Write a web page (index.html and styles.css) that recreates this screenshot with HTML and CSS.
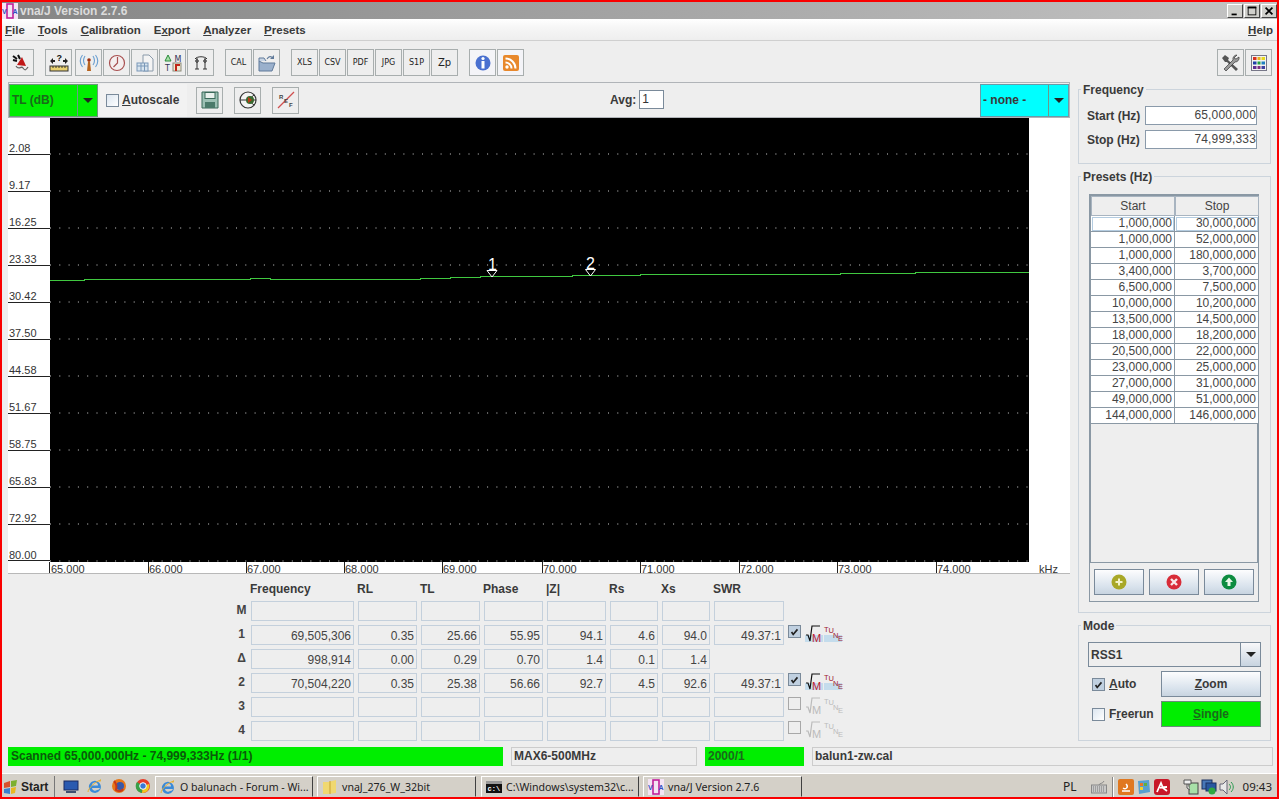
FILE: index.html
```html
<!DOCTYPE html>
<html lang="en">
<head>
<meta charset="utf-8">
<title>vna/J Version 2.7.6</title>
<link rel="stylesheet" href="styles.css">
</head>
<body>
<div class="window">
  <header class="titlebar">
    <svg class="appicon" viewBox="0 0 16 16"><rect width="16" height="16" fill="#f4e4f4"/><rect x="5" y="1" width="6" height="14" fill="none" stroke="#c0209a" stroke-width="1.6"/><text x="0" y="11" class="appicon-t">V</text><text x="10.500" y="11" class="appicon-t">A</text></svg>
    <span class="title-text">vna/J Version 2.7.6</span>
    <div class="winbtns">
      <span class="winbtn"><svg viewBox="0 0 16 14"><rect x="4" y="10" width="6" height="2" fill="#000"/></svg></span>
      <span class="winbtn"><svg viewBox="0 0 16 14"><rect x="3.500" y="2.500" width="9" height="9" fill="none" stroke="#000"/><rect x="3" y="2" width="10" height="2" fill="#000"/></svg></span>
      <span class="winbtn"><svg viewBox="0 0 16 14"><path d="M4 3l8 8M12 3l-8 8" stroke="#000" stroke-width="2"/></svg></span>
    </div>
  </header>

  <nav class="menubar">
    <span><u>F</u>ile</span><span><u>T</u>ools</span><span><u>C</u>alibration</span><span>E<u>x</u>port</span><span><u>A</u>nalyzer</span><span><u>P</u>resets</span>
    <span class="menu-help"><u>H</u>elp</span>
  </nav>

  <div class="toolbar">
    <div class="tgroup">
      <span class="tb"><svg viewBox="0 0 22 22"><path d="M3 4l4 3M8 3l2 4M3 8l4 1" stroke="#111" stroke-width="2"/><path d="M7 13l5-8 4 9z" fill="#c01818"/><path d="M6 14c3 5 5-1 7 2s3 2 5-1" fill="none" stroke="#666" stroke-width="1.300"/></svg></span>
    </div>
    <div class="tgroup">
      <span class="tb tb-wide"><svg viewBox="0 0 22 22"><path d="M2 9l3-3v2h2v2H5v2zM20 9l-3-3v2h-2v2h2v2z" fill="#222"/><text x="8.500" y="9" class="tb-q">?</text><rect x="2" y="14" width="18" height="5" fill="#e8d070" stroke="#333"/><path d="M5 14v2M8 14v2M11 14v2M14 14v2M17 14v2" stroke="#333"/></svg></span>
      <span class="tb"><svg viewBox="0 0 22 22"><path d="M10 10l1-1 1 1 1 9H9z" fill="#b8641e"/><circle cx="11" cy="8" r="1.800" fill="#a03010"/><path d="M7 4c-2 3-2 6 0 9M15 4c2 3 2 6 0 9M4.500 3c-3 4-3 8 0 12M17.500 3c3 4 3 8 0 12" fill="none" stroke="#6a9ed0" stroke-width="1.100"/></svg></span>
      <span class="tb"><svg viewBox="0 0 22 22"><circle cx="11" cy="11" r="7.500" fill="#f4eeee" stroke="#a85050" stroke-width="1.200"/><path d="M11.500 5v6l-4 4" fill="none" stroke="#a85050" stroke-width="1.200"/></svg></span>
      <span class="tb"><svg viewBox="0 0 22 22"><path d="M9 3h6l4 4v12H9z" fill="#f4f4f4" stroke="#8a9aaa"/><rect x="3" y="11" width="11" height="8" fill="#d8e4ee" stroke="#7a98b8"/><path d="M3 14h11M7 11v8M10.500 11v8" stroke="#7a98b8"/></svg></span>
      <span class="tb"><svg viewBox="0 0 22 22"><path d="M3 9l3-6 3 6z" fill="#a8e0a8" stroke="#2a8a3a"/><text x="12.500" y="9.500" class="lm-t">M</text><text x="3" y="19" class="lm-t">T</text><rect x="11" y="11" width="8" height="8" fill="#f0e8d0" stroke="#8a8a7a"/><path d="M14 19v-6h4" fill="none" stroke="#c02818" stroke-width="2"/></svg></span>
      <span class="tb"><svg viewBox="0 0 22 22"><path d="M5 7c2-3 10-3 12 0" fill="none" stroke="#333"/><path d="M7 6v11M15 6v11M5 17h4M13 17h4" stroke="#333"/><circle cx="7" cy="9" r="1.300" fill="none" stroke="#333"/><circle cx="15" cy="9" r="1.300" fill="none" stroke="#333"/></svg></span>
    </div>
    <div class="tgroup">
      <span class="tb tb-txt">CAL</span>
      <span class="tb"><svg viewBox="0 0 22 22"><path d="M3 9v10h13l3-8H7z" fill="#9ab0cc" stroke="#607a9a"/><path d="M3 9V6h5l2 3" fill="#c8d4e4" stroke="#607a9a"/><path d="M11 7c2-3 4-3 6-1" fill="none" stroke="#607a9a" stroke-width="1.200"/><path d="M18 3v4h-4z" fill="#607a9a"/></svg></span>
    </div>
    <div class="tgroup">
      <span class="tb tb-txt">XLS</span><span class="tb tb-txt">CSV</span><span class="tb tb-txt">PDF</span><span class="tb tb-txt">JPG</span><span class="tb tb-txt">S1P</span><span class="tb tb-txt tb-zp">Zp</span>
    </div>
    <div class="tgroup">
      <span class="tb tb-light"><svg viewBox="0 0 22 22"><circle cx="11" cy="11" r="7.500" fill="#4a70d0"/><circle cx="11" cy="6.500" r="1.600" fill="#fff"/><rect x="9.500" y="9" width="3" height="7.500" fill="#fff"/></svg></span>
      <span class="tb tb-light"><svg viewBox="0 0 22 22"><rect x="3" y="3" width="16" height="16" rx="2" fill="#e8882c"/><circle cx="7" cy="15" r="1.700" fill="#fff"/><path d="M5.500 10.500a6 6 0 0 1 6 6M5.500 6.500a10 10 0 0 1 10 10" fill="none" stroke="#fff" stroke-width="2"/></svg></span>
    </div>
    <div class="tgroup tgroup-end">
      <span class="tb"><svg viewBox="0 0 22 22"><path d="M5 3l4 3-1 2 10 9-2 2L7 10 5 10 2 6z" fill="#555"/><path d="M17 3a4 4 0 0 0-4 5L4 17l2 2 9-9a4 4 0 0 0 4-5l-3 2-2-1z" fill="#999" stroke="#222" stroke-width=".6"/></svg></span>
      <span class="tb"><svg viewBox="0 0 22 22"><rect x="3.500" y="3.500" width="15" height="15" fill="#f4f4f0" stroke="#778"/><rect x="5" y="5" width="3.500" height="3" fill="#d83020"/><rect x="9.500" y="5" width="3" height="3" fill="#e8b020"/><rect x="13.500" y="5" width="3.500" height="3" fill="#e8d820"/><rect x="5" y="9.500" width="3.500" height="3" fill="#2040a8"/><rect x="9.500" y="9.500" width="3" height="3" fill="#20a040"/><rect x="13.500" y="9.500" width="3.500" height="3" fill="#2080c0"/><rect x="5" y="14" width="3.500" height="3" fill="#603090"/><rect x="9.500" y="14" width="3" height="3" fill="#803080"/><rect x="13.500" y="14" width="3.500" height="3" fill="#4040a0"/></svg></span>
    </div>
  </div>

  <div class="main">
    <section class="left">
      <div class="chartbar">
        <div class="combo combo-green"><span class="combo-text">TL (dB)</span><span class="combo-arrow"></span></div>
        <div class="autoscale"><span class="check"></span><span class="bold-label"><u>A</u>utoscale</span></div>
        <span class="tb tb-bar"><svg viewBox="0 0 22 22"><path d="M3 3h16v16H3z" fill="#9cc0b4" stroke="#3a6a5a"/><rect x="6" y="3.500" width="10" height="6" fill="#e8f0ec" stroke="#3a6a5a"/><rect x="6" y="13" width="10" height="6" fill="#4a7a6a"/></svg></span>
        <span class="tb tb-bar tb-bar2"><svg viewBox="0 0 22 22"><circle cx="11" cy="11" r="8" fill="#f4f4f4" stroke="#333" stroke-width="1.200"/><path d="M3 11h16M11 11l6-5M11 11l6 5" stroke="#333"/><circle cx="13" cy="11" r="4" fill="#3a6a30"/><path d="M11 8l4 3-4 3z" fill="#b83a18"/></svg></span>
        <span class="tb tb-bar tb-bar3"><svg viewBox="0 0 22 22"><path d="M3 19L19 3" stroke="#d05050" stroke-width="1.300"/><text x="4" y="10" class="ref-t">R</text><text x="9" y="14" class="ref-t">E</text><text x="14" y="18" class="ref-t">F</text></svg></span>
        <div class="avg"><span class="bold-label">Avg:</span><span class="avg-field">1</span></div>
        <div class="combo combo-cyan"><span class="combo-text">- none -</span><span class="combo-arrow"></span></div>
      </div>

      <div class="chart">
        <svg class="chart-svg" viewBox="8 118 1062 456">
          <rect x="50" y="118" width="979" height="444" fill="#000"/>
          <g class="grid">
            <path d="M50 154H1029"/><path d="M50 191H1029"/><path d="M50 228H1029"/><path d="M50 265H1029"/><path d="M50 302H1029"/><path d="M50 339H1029"/><path d="M50 376H1029"/><path d="M50 413H1029"/><path d="M50 450H1029"/><path d="M50 487H1029"/><path d="M50 524H1029"/><path d="M50 561H1029"/>
          </g>
          <g class="ticks">
            <path d="M8 154.500H50M8 191.500H50M8 228.500H50M8 265.500H50M8 302.500H50M8 339.500H50M8 376.500H50M8 413.500H50M8 450.500H50M8 487.500H50M8 524.500H50M8 560.500H50"/>
            <path d="M49.500 562V573M148.500 562V573M246.500 562V573M344.500 562V573M442.500 562V573M542.500 562V573M640.500 562V573M739.500 562V573M837.500 562V573M936.500 562V573"/>
          </g>
          <g class="axis">
            <text x="9" y="152">2.08</text><text x="9" y="189">9.17</text><text x="9" y="226">16.25</text><text x="9" y="263">23.33</text><text x="9" y="300">30.42</text><text x="9" y="337">37.50</text><text x="9" y="374">44.58</text><text x="9" y="411">51.67</text><text x="9" y="448">58.75</text><text x="9" y="485">65.83</text><text x="9" y="522">72.92</text><text x="9" y="559">80.00</text>
            <text x="51" y="573">65.000</text><text x="149" y="573">66.000</text><text x="247" y="573">67.000</text><text x="345" y="573">68.000</text><text x="443" y="573">69.000</text><text x="543" y="573">70.000</text><text x="641" y="573">71.000</text><text x="740" y="573">72.000</text><text x="838" y="573">73.000</text><text x="937" y="573">74.000</text>
            <text x="1039" y="573">kHz</text>
          </g>
          <path class="trace" d="M50 280.500 H84 V279.500 H250 V278.500 H270 V279.500 H420 V278.500 H450 V277.500 H480 V276.500 H572 V275.500 H640 V274.500 H720 V274.500 H840 V273.500 H915 V272.500 H1029"/>
          <g class="marker">
            <path d="M487 270.500H497L492 277z"/>
            <path d="M585.500 269.500H595.500L590.500 276z"/>
          </g>
          <text x="488" y="270" class="marker-n">1</text>
          <text x="586" y="269" class="marker-n">2</text>
        </svg>
      </div>

      <div class="markers">
        <span class="mh"></span><span class="mh">Frequency</span><span class="mh">RL</span><span class="mh">TL</span><span class="mh">Phase</span><span class="mh">|Z|</span><span class="mh">Rs</span><span class="mh">Xs</span><span class="mh">SWR</span><span></span>

        <span class="ml">M</span><span class="mf"></span><span class="mf"></span><span class="mf"></span><span class="mf"></span><span class="mf"></span><span class="mf"></span><span class="mf"></span><span class="mf"></span><span></span>

        <span class="ml">1</span><span class="mf">69,505,306</span><span class="mf">0.35</span><span class="mf">25.66</span><span class="mf">55.95</span><span class="mf">94.1</span><span class="mf">4.6</span><span class="mf">94.0</span><span class="mf">49.37:1</span>
        <span class="mtools"><span class="check check-on"><svg viewBox="0 0 13 13"><path d="M3 7l2 3 5-6" fill="none" stroke="#222" stroke-width="2"/></svg></span>
          <svg class="mi" viewBox="0 0 18 18"><rect y="10" width="18" height="7" fill="#c4dcec"/><path d="M1 10h2l2 6 2-15h8" fill="none" stroke="#111" stroke-width="1.200"/><text x="7" y="17" class="mi-m">M</text></svg>
          <svg class="mi" viewBox="0 0 18 18"><rect y="10" width="18" height="7" fill="#c4dcec"/><text x="0" y="7" class="mi-t">T</text><text x="4.500" y="8" class="mi-t">U</text><text x="9" y="13" class="mi-t">N</text><text x="14" y="16" class="mi-t">E</text></svg>
        </span>

        <span class="ml">&#916;</span><span class="mf">998,914</span><span class="mf">0.00</span><span class="mf">0.29</span><span class="mf">0.70</span><span class="mf">1.4</span><span class="mf">0.1</span><span class="mf">1.4</span><span></span><span></span>

        <span class="ml">2</span><span class="mf">70,504,220</span><span class="mf">0.35</span><span class="mf">25.38</span><span class="mf">56.66</span><span class="mf">92.7</span><span class="mf">4.5</span><span class="mf">92.6</span><span class="mf">49.37:1</span>
        <span class="mtools"><span class="check check-on"><svg viewBox="0 0 13 13"><path d="M3 7l2 3 5-6" fill="none" stroke="#222" stroke-width="2"/></svg></span>
          <svg class="mi" viewBox="0 0 18 18"><rect y="10" width="18" height="7" fill="#c4dcec"/><path d="M1 10h2l2 6 2-15h8" fill="none" stroke="#111" stroke-width="1.200"/><text x="7" y="17" class="mi-m">M</text></svg>
          <svg class="mi" viewBox="0 0 18 18"><rect y="10" width="18" height="7" fill="#c4dcec"/><text x="0" y="7" class="mi-t">T</text><text x="4.500" y="8" class="mi-t">U</text><text x="9" y="13" class="mi-t">N</text><text x="14" y="16" class="mi-t">E</text></svg>
        </span>

        <span class="ml">3</span><span class="mf"></span><span class="mf"></span><span class="mf"></span><span class="mf"></span><span class="mf"></span><span class="mf"></span><span class="mf"></span><span class="mf"></span>
        <span class="mtools"><span class="check check-off"></span>
          <svg class="mi" viewBox="0 0 18 18"><path d="M1 10h2l2 6 2-15h8" fill="none" stroke="#bbb" stroke-width="1.200"/><text x="7" y="17" class="mi-off">M</text></svg>
          <svg class="mi" viewBox="0 0 18 18"><text x="0" y="7" class="mi-off2">T</text><text x="4.500" y="8" class="mi-off2">U</text><text x="9" y="13" class="mi-off2">N</text><text x="14" y="16" class="mi-off2">E</text></svg>
        </span>

        <span class="ml">4</span><span class="mf"></span><span class="mf"></span><span class="mf"></span><span class="mf"></span><span class="mf"></span><span class="mf"></span><span class="mf"></span><span class="mf"></span>
        <span class="mtools"><span class="check check-off"></span>
          <svg class="mi" viewBox="0 0 18 18"><path d="M1 10h2l2 6 2-15h8" fill="none" stroke="#bbb" stroke-width="1.200"/><text x="7" y="17" class="mi-off">M</text></svg>
          <svg class="mi" viewBox="0 0 18 18"><text x="0" y="7" class="mi-off2">T</text><text x="4.500" y="8" class="mi-off2">U</text><text x="9" y="13" class="mi-off2">N</text><text x="14" y="16" class="mi-off2">E</text></svg>
        </span>
      </div>
    </section>

    <aside class="side">
      <fieldset class="fs fs-freq">
        <legend>Frequency</legend>
        <div class="freq-grid">
          <label>Start (Hz)</label><span class="field">65,000,000</span>
          <label>Stop (Hz)</label><span class="field">74,999,333</span>
        </div>
      </fieldset>

      <fieldset class="fs fs-presets">
        <legend>Presets (Hz)</legend>
        <div class="presets-box">
          <div class="table-wrap">
            <table class="ptable">
              <thead><tr><th>Start</th><th>Stop</th></tr></thead>
              <tbody>
                <tr class="sel"><td>1,000,000</td><td>30,000,000</td></tr>
                <tr><td>1,000,000</td><td>52,000,000</td></tr>
                <tr><td>1,000,000</td><td>180,000,000</td></tr>
                <tr><td>3,400,000</td><td>3,700,000</td></tr>
                <tr><td>6,500,000</td><td>7,500,000</td></tr>
                <tr><td>10,000,000</td><td>10,200,000</td></tr>
                <tr><td>13,500,000</td><td>14,500,000</td></tr>
                <tr><td>18,000,000</td><td>18,200,000</td></tr>
                <tr><td>20,500,000</td><td>22,000,000</td></tr>
                <tr><td>23,000,000</td><td>25,000,000</td></tr>
                <tr><td>27,000,000</td><td>31,000,000</td></tr>
                <tr><td>49,000,000</td><td>51,000,000</td></tr>
                <tr><td>144,000,000</td><td>146,000,000</td></tr>
              </tbody>
            </table>
          </div>
          <div class="preset-btns">
            <span class="btn"><svg class="pi" viewBox="0 0 16 16"><circle cx="8" cy="8" r="7.500" fill="#a8a828"/><path d="M8 4.500v7M4.500 8h7" stroke="#f4f4c8" stroke-width="2"/></svg></span>
            <span class="btn"><svg class="pi" viewBox="0 0 16 16"><circle cx="8" cy="8" r="7.500" fill="#d82c38"/><path d="M5 5l6 6M11 5l-6 6" stroke="#f8e8e8" stroke-width="2.400"/></svg></span>
            <span class="btn"><svg class="pi" viewBox="0 0 16 16"><circle cx="8" cy="8" r="7.500" fill="#0c8c40"/><path d="M8 3.500L12 8H9.500v4h-3V8H4z" fill="#e8f8e8"/></svg></span>
          </div>
        </div>
      </fieldset>

      <fieldset class="fs fs-mode">
        <legend>Mode</legend>
        <div class="mode-combo"><span class="combo-text">RSS1</span><span class="mode-arrow"><span class="arrow-glyph"></span></span></div>
        <div class="mode-grid">
          <div class="mode-opt"><span class="check check-on"><svg viewBox="0 0 13 13"><path d="M3 7l2 3 5-6" fill="none" stroke="#222" stroke-width="2"/></svg></span><span class="bold-label"><u>A</u>uto</span></div>
          <span class="btn btn-text"><span><u>Z</u>oom</span></span>
          <div class="mode-opt"><span class="check"></span><span class="bold-label">F<u>r</u>eerun</span></div>
          <span class="btn btn-text btn-green"><span><u>S</u>ingle</span></span>
        </div>
      </fieldset>
    </aside>
  </div>

  <div class="status">
    <span class="st st-scan">Scanned 65,000,000Hz - 74,999,333Hz (1/1)</span>
    <span class="st st-dev">MAX6-500MHz</span>
    <span class="st st-count">2000/1</span>
    <span class="st st-cal">balun1-zw.cal</span>
  </div>

  <footer class="taskbar">
    <span class="start"><svg class="start-i" viewBox="0 0 16 16"><path d="M1 4l6-2v6l-6 1z" fill="#d8502c"/><path d="M8 2l6-1-1 6-5 1z" fill="#7cb030"/><path d="M1 10l6-1v6l-6-1z" fill="#3880d0"/><path d="M8 9l5-1-1 6-4 1z" fill="#e8b820"/></svg>Start</span>
    <div class="quick">
      <svg class="qi" viewBox="0 0 16 16"><rect x="1" y="3" width="14" height="9" fill="#2a5ab0" stroke="#1a2a60"/><rect x="3" y="13" width="10" height="2" fill="#405070"/></svg>
      <svg class="qi" viewBox="0 0 16 16"><path d="M2 10a6 6 0 1 1 11 2h-3a3 3 0 0 0 3-2H5a3 3 0 0 0 5 2h3a6 6 0 0 1-11-2zM5 7.500h6a3 3 0 0 0-6 0z" fill="#3a8ad8"/><path d="M1 14c0-4 8-11 13-12-2 0-1 1-1 2" fill="none" stroke="#e8b030"/></svg>
      <svg class="qi" viewBox="0 0 16 16"><circle cx="8" cy="8" r="7" fill="#e87818"/><circle cx="9" cy="8" r="4" fill="#3858a8"/><path d="M3 3c2 2 3 5 2 9 3 2 6 1 7-1" fill="none" stroke="#c83818" stroke-width="2"/></svg>
      <svg class="qi" viewBox="0 0 16 16"><circle cx="8" cy="8" r="7" fill="#e83c28"/><path d="M8 8L2 4a7 7 0 0 0 5 11z" fill="#38a048"/><path d="M8 8l6-2a7 7 0 0 1-7 9z" fill="#f0c820"/><circle cx="8" cy="8" r="3.300" fill="#3878d8" stroke="#fff"/></svg>
    </div>
    <span class="task task-1"><svg class="qi" viewBox="0 0 16 16"><path d="M2 10a6 6 0 1 1 11 2h-3a3 3 0 0 0 3-2H5a3 3 0 0 0 5 2h3a6 6 0 0 1-11-2zM5 7.500h6a3 3 0 0 0-6 0z" fill="#3a8ad8"/><path d="M1 14c0-4 8-11 13-12-2 0-1 1-1 2" fill="none" stroke="#e8b030"/></svg><span class="task-t">O balunach - Forum - Wi...</span></span>
    <span class="task task-2"><svg class="qi" viewBox="0 0 16 16"><path d="M1 3h5l8-2v13l-8 1H1z" fill="#f0d870"/><path d="M8 2v13" stroke="#c8a030"/></svg><span class="task-t">vnaJ_276_W_32bit</span></span>
    <span class="task task-3"><svg class="qi" viewBox="0 0 16 16"><rect x="0" y="2" width="16" height="12" fill="#111"/><rect x="0" y="2" width="16" height="3" fill="#999"/><text x="1.500" y="12" class="cmd-t">c:\</text></svg><span class="task-t">C:\Windows\system32\c...</span></span>
    <span class="task task-4"><svg class="qi" viewBox="0 0 16 16"><rect width="16" height="16" fill="#f4e4f4"/><rect x="5" y="1" width="6" height="14" fill="none" stroke="#c0209a" stroke-width="1.600"/><text x="0" y="11" class="appicon-t">V</text><text x="10.500" y="11" class="appicon-t">A</text></svg><span class="task-t">vna/J Version 2.7.6</span></span>
    <div class="tray">
      <span class="lang">PL</span>
      <svg class="kbd" viewBox="0 0 16 14"><rect x="0.500" y="5" width="15" height="8" fill="#c8c8c8" stroke="#888"/><path d="M2 7h12M2 9h12M2 11h12" stroke="#777" stroke-dasharray="1 1"/><path d="M8 5c0-2 4-1 5-4" fill="none" stroke="#888"/></svg>
      <span class="tray-sep"></span>
      <svg class="tri" viewBox="0 0 16 16"><rect width="16" height="16" rx="2" fill="#e07820"/><path d="M4 12h8M5 9c3 2 6-1 3-4" fill="none" stroke="#fff" stroke-width="1.500"/></svg>
      <svg class="tri" viewBox="0 0 16 16"><path d="M2 2l11-1 1 12-11 2z" fill="#58a0d0"/><rect x="4" y="4" width="3" height="3" fill="#e87828"/><rect x="8" y="4" width="3" height="3" fill="#60b040"/><rect x="4" y="8" width="3" height="3" fill="#f0d030"/></svg>
      <svg class="tri" viewBox="0 0 16 16"><rect width="16" height="16" rx="3" fill="#c81828"/><path d="M3 13l4-9 2 5 4 3M6 9c3-1 5-1 7-1" fill="none" stroke="#fff" stroke-width="1.800"/></svg>
      <svg class="tri tri-gap" viewBox="0 0 16 16"><rect x="6" y="4" width="9" height="11" fill="#a8e0a8" stroke="#444"/><path d="M1 1h7v4H1zM4 5v4l3 2" fill="#eee" stroke="#555"/></svg>
      <svg class="tri" viewBox="0 0 16 16"><rect x="1" y="1" width="10" height="9" fill="#4878b8" stroke="#1a3060"/><rect x="5" y="4" width="10" height="8" fill="#2858a0" stroke="#1a3060"/><circle cx="11" cy="12" r="3.500" fill="#30a840"/></svg>
      <svg class="tri" viewBox="0 0 16 16"><path d="M1 5h3l4-4v14l-4-4H1z" fill="#e8e8e8" stroke="#667"/><path d="M10 5c2 2 2 4 0 6M12 3c3 3 3 7 0 10" fill="none" stroke="#2a9a50"/></svg>
      <span class="clock">09:43</span>
    </div>
  </footer>
</div>
</body>
</html>
```

FILE: styles.css
```css
* { box-sizing: border-box; }
html, body { margin: 0; padding: 0; }
body { width: 1279px; height: 799px; overflow: hidden; font-family: "Liberation Sans", Arial, sans-serif; font-size: 12px; color: #333; background: #fa0000; }
.window { width: 1279px; height: 799px; border: 2px solid #fa0000; display: flex; flex-direction: column; background: #eeeeee; }

.titlebar { height: 17px; display: flex; align-items: center; background: linear-gradient(90deg, #858585, #c4c4c4); flex: none; }
.appicon { width: 16px; height: 16px; flex: none; }
.appicon-t { font: bold 7px "Liberation Sans", sans-serif; fill: #3050c0; }
.title-text { margin-left: 2px; font-weight: bold; font-size: 12px; color: #dcdcdc; }
.winbtns { margin-left: auto; margin-right: 0; display: flex; gap: 1px; }
.winbtn { width: 16px; height: 14px; background: #d0d0cc; border: 1px solid; border-color: #fff #444 #444 #fff; display: flex; }
.winbtn svg { width: 100%; height: 100%; }

.menubar { height: 22px; flex: none; display: flex; align-items: center; gap: 13px; padding: 0 4px 0 3px; font-weight: bold; font-size: 11.500px; color: #3a3a3a; background: linear-gradient(#fff 0, #f6f6f6 40%, #eeeeee 100%); border-bottom: 1px solid #cfcfcf; }
.menu-help { margin-left: auto; }

.toolbar { height: 41px; flex: none; display: flex; padding: 8px 4px 0 5px; gap: 10px; background: #eeeeee; }
.tgroup { display: flex; }
.tgroup-end { margin-left: auto; }
.tb { width: 27px; height: 27px; margin-right: 1px; background: #eeeeee; border: 1px solid #a8aeae; display: flex; align-items: center; justify-content: center; flex: none; }
.tb svg { width: 22px; height: 22px; }
.tb-wide { margin-right: 3px; }
.tb-light { background: #f4f4f8; }
.tb-txt { font: 8px "DejaVu Sans", sans-serif; color: #222; }
.tb-zp { font-size: 10px; }
.tb-q { font: bold 9px "Liberation Sans", sans-serif; fill: #111; }
.lm-t { font: 8px "DejaVu Sans", sans-serif; fill: #335; }
.ref-t { font: bold 6px "Liberation Sans", sans-serif; fill: #444; }

.main { display: flex; height: 659px; flex: none; padding-left: 6px; }
.left { width: 1062px; flex: none; display: flex; flex-direction: column; }
.chartbar { height: 36px; flex: none; display: flex; align-items: center; border: 1px solid #b0b4b8; background: #eeeeee; position: relative; }

.combo { display: flex; height: 33px; flex: none; border: 1px solid #6a9a7a; align-items: center; }
.combo-green { width: 89px; margin-left: 0; background: #00ee00; }
.combo-cyan { width: 89px; margin-left: auto; background: #00ffff; border-color: #6a9aa8; }
.combo-text { padding-left: 2px; font-weight: bold; flex: 1; color: #3a3a3a; }
.combo-green .combo-text { color: #1a6a1a; }
.combo-arrow { width: 20px; height: 100%; border-left: 1px solid #6a9a8a; display: flex; align-items: center; justify-content: center; }
.combo-arrow::after, .arrow-glyph { content: ""; width: 0; height: 0; border: 5px solid transparent; border-top: 5px solid #222; border-bottom: 0; display: block; }

.autoscale { width: 87px; height: 33px; margin-left: 2px; padding-left: 6px; display: flex; align-items: center; gap: 3px; background: #f2f2f2; }
.bold-label { font-weight: bold; color: #3a3a3a; }
.check { width: 13px; height: 13px; border: 1px solid #7a8a9a; background: linear-gradient(135deg, #dce6f0, #fff); display: block; flex: none; }
.check svg { display: block; width: 100%; height: 100%; }
.check-on { background: #c0d0e0; }
.check-off { background: none; border-color: #a8a8a8; }

.tb-bar { margin-left: 9px; margin-right: 0; }
.tb-bar2, .tb-bar3 { margin-left: 11px; }
.avg { position: absolute; left: 601px; top: 7px; display: flex; align-items: center; gap: 3px; }
.avg-field { width: 25px; height: 19px; background: #fff; border: 1px solid #7a8a9a; padding-left: 2px; line-height: 17px; color: #333; }

.chart { height: 456px; flex: none; background: #fff; border-bottom: 1px solid #b8b8b8; }
.chart-svg { display: block; width: 1062px; height: 456px; }
.grid path { stroke: #d0d0d0; stroke-width: 1; stroke-dasharray: 1 8.3; fill: none; }
.ticks path { stroke: #222; stroke-width: 1; fill: none; }
.axis text { font: 11px "Liberation Sans", sans-serif; fill: #333; }
.trace { fill: none; stroke: #40c840; stroke-width: 1; shape-rendering: crispEdges; }
.marker path { fill: none; stroke: #fff; stroke-width: 1; }
.marker-n { font: 16px "Liberation Sans", sans-serif; fill: #fff; }

.markers { display: grid; margin-left: 224px; grid-template-columns: 15px 103px 59px 59px 59px 59px 48px 48px 70px 60px; column-gap: 4px; row-gap: 4px; grid-auto-rows: 20px; grid-template-rows: 23px; margin-top: 0; }
.mh { font-weight: bold; color: #3a3a3a; padding-top: 8px; line-height: 14px; margin-left: -1px; }
.ml { font-weight: bold; line-height: 18px; text-align: center; color: #444; margin-left: 4px; }
.mf { border: 1px solid #c4d0dc; padding-right: 2px; text-align: right; line-height: 20px; color: #444; background: #eeeeee; }
.mtools { display: flex; align-items: flex-start; }
.mi { width: 18px; height: 18px; flex: none; margin-left: 1px; overflow: visible; }
.mi:first-of-type { margin-left: 4px; }
.mi-m { font: 11px "Liberation Sans", sans-serif; fill: #c02030; }
.mi-t { font: 7.500px "Liberation Sans", sans-serif; fill: #a02030; }
.mi-off { font: 11px "Liberation Sans", sans-serif; fill: #bbb; }
.mi-off2 { font: 7.500px "Liberation Sans", sans-serif; fill: #bbb; }

.side { width: 193px; margin-left: 8px; display: flex; flex-direction: column; gap: 5px; }
.fs { margin: 0; padding: 0; border: 1px solid #ccd4dc; min-width: 0; }
.fs legend { font-weight: bold; color: #3a3a3a; padding: 1px 2px 0; line-height: 14px; }
.fs-freq { height: 82px; padding: 9px 13px 0 8px; }
.fs-freq legend { margin-left: -6px; }
.fs-presets { height: 444px; padding: 10px 11px 0 10px; }
.fs-presets legend { margin-left: -8px; }
.fs-mode { height: 123px; padding: 9px 9px 0 9px; }
.fs-mode legend { margin-left: -7px; }

.freq-grid { display: grid; grid-template-columns: 58px 1fr; row-gap: 5px; align-items: center; }
.freq-grid label { font-weight: bold; color: #3a3a3a; }
.field { height: 19px; background: #fff; border: 1px solid #8a9aaa; text-align: right; padding-right: 0; line-height: 17px; color: #444; letter-spacing: 0.15px; }

.presets-box { height: 408px; border: 1px solid #8a98a4; display: flex; flex-direction: column; }
.table-wrap { height: 369px; border: 1px solid #8a98a4; border-top-width: 2px; margin: -1px 0 0 0; }
.ptable { width: 168px; border-collapse: separate; border-spacing: 0; table-layout: fixed; background: #fff; }
.ptable th { height: 20px; background: #eeeeee; font-weight: normal; color: #444; border: 1px solid #a8b4c0; padding: 0; }
.ptable th:first-child { width: 84px; }
.ptable td { height: 16px; padding: 0 2px 0 0; text-align: right; color: #444; border-right: 1px solid #8a98a4; border-bottom: 1px solid #8a98a4; line-height: 15px; background: #fff; }
.ptable .sel td { outline: 1px solid #b4cce0; outline-offset: -2px; }
.preset-btns { display: flex; gap: 5px; padding: 6px 0 0 4px; }
.btn { width: 50px; height: 26px; display: flex; align-items: center; justify-content: center; border: 1px solid #7a8a9a; background: linear-gradient(#fdfdfe, #d8e2ec 70%, #c8d4e0); flex: none; }
.pi { width: 16px; height: 16px; }

.mode-combo { height: 25px; width: 173px; margin-top: 0; display: flex; align-items: center; border: 1px solid #7a8a9a; background: #eeeeee; margin-left: 0; }
.mode-arrow { width: 20px; height: 100%; border-left: 1px solid #7a8a9a; background: linear-gradient(#f8f8fa, #c8d4e0); display: flex; align-items: center; justify-content: center; }
.mode-grid { display: grid; grid-template-columns: 73px 100px; grid-template-rows: 26px 26px; row-gap: 4px; margin-top: 4px; }
.mode-opt { display: flex; align-items: center; gap: 4px; padding-left: 4px; }
.btn-text { width: 100px; font-weight: bold; color: #3a3a3a; }
.btn-green { background: #00ee00; color: #1a6a1a; border-color: #6a8a7a; }

.status { height: 19px; flex: none; margin-top: 6px; padding-left: 6px; display: flex; gap: 8px; }
.st { font-weight: bold; line-height: 17px; padding-left: 2px; color: #3a3a3a; border: 1px solid #cccccc; }
.st-scan { width: 495px; background: #00ee00; color: #0a5a0a; border-color: #00ee00; }
.st-dev { width: 186px; }
.st-count { width: 99px; background: #00ee00; color: #1a6a1a; border-color: #00ee00; }
.st-cal { width: 461px; }

.taskbar { height: 24px; flex: none; margin-top: 7px; display: flex; background: #d4d0c8; border-top: 1px solid #fff; padding-top: 2px; position: relative; font-family: "Noto Sans", Tahoma, sans-serif; font-size: 10.600px; color: #222; }
.start { width: 52px; margin-left: 1px; height: 21px; display: flex; align-items: center; gap: 2px; font: bold 12px "Liberation Sans", sans-serif; color: #222; border-right: 1px solid #777; flex: none; }
.start-i { width: 16px; height: 16px; flex: none; }
.quick { width: 100px; display: flex; gap: 8px; padding: 2px 0 0 8px; flex: none; }
.qi { width: 16px; height: 16px; flex: none; }
.task { height: 21px; flex: none; display: flex; align-items: center; gap: 2px; padding: 0 0 0 4px; border: 1px solid; border-color: #fff #404040 #d4d0c8 #fff; white-space: nowrap; overflow: hidden; background: #d4d0c8; }
.task-t { padding-left: 2px; }
.task-1 { width: 158px; }
.task-2 { width: 159px; margin-left: 4px; }
.task-3 { width: 158px; margin-left: 5px; }
.task-4 { width: 159px; margin-left: 4px; }
.cmd-t { font: bold 7px "Liberation Mono", monospace; fill: #fff; }
.tray { margin-left: auto; display: flex; align-items: center; height: 21px; padding-right: 5px; }
.lang { margin-right: 14px; font-size: 12px; }
.kbd { width: 16px; height: 14px; margin-right: 5px; }
.tray-sep { width: 2px; height: 20px; border-left: 1px solid #888; border-right: 1px solid #fff; margin-right: 4px; }
.tri { width: 16px; height: 16px; margin-right: 2px; flex: none; }
.tri-gap { margin-left: 11px; }
.clock { margin-left: 6px; font-size: 11.500px; }
```
